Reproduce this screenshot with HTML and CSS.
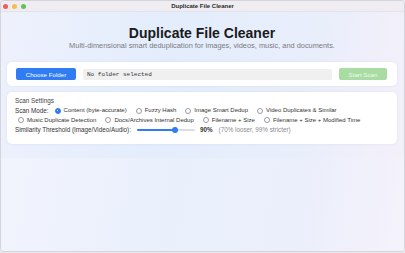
FILE: index.html
```html
<!DOCTYPE html>
<html lang="en">
<head>
  <meta charset="UTF-8" />
  <meta name="viewport" content="width=device-width, initial-scale=1.0"/>
  <title>Duplicate File Cleaner</title>
  <link rel="stylesheet" href="styles.css">
</head>
<body>

<div class="window">
  <!-- Title bar -->
  <div class="titlebar">
    <div class="lights">
      <span class="light red"></span>
      <span class="light yellow"></span>
      <span class="light green"></span>
    </div>
    <div class="window-title">Duplicate File Cleaner</div>
  </div>

  <div class="app">
    <div class="main">
      <div class="header">
        <h1>Duplicate File Cleaner</h1>
        <p class="subtitle">Multi-dimensional smart deduplication for images, videos, music, and documents.</p>
      </div>

      <!-- Folder picker -->
      <div class="card toolbar">
        <button class="choose-btn">Choose Folder</button>
        <div class="path">No folder selected</div>
        <button class="scan-btn" disabled>Start Scan</button>
      </div>

      <!-- Settings -->
      <div class="card settings">
        <div class="section-title">Scan Settings</div>
        <div class="modes">
          <span class="label">Scan Mode:</span>
          <label class="radio"><span class="dot checked"></span>Content (byte-accurate)</label>
          <label class="radio"><span class="dot"></span>Fuzzy Hash</label>
          <label class="radio"><span class="dot"></span>Image Smart Dedup</label>
          <label class="radio"><span class="dot"></span>Video Duplicates &amp; Similar</label>
          <label class="radio"><span class="dot"></span>Music Duplicate Detection</label>
          <label class="radio"><span class="dot"></span>Docs/Archives Internal Dedup</label>
          <label class="radio"><span class="dot"></span>Filename + Size</label>
          <label class="radio"><span class="dot"></span>Filename + Size + Modified Time</label>
        </div>
        <div class="threshold">
          <span class="label">Similarity Threshold (Image/Video/Audio):</span>
          <div class="slider">
            <div class="fill" style="width: 66%;"></div>
            <div class="thumb" style="left: 66%;"></div>
          </div>
          <span class="value">90%</span>
          <span class="hint">(70% looser, 99% stricter)</span>
        </div>
      </div>
    </div>
  </div>
</div>

</body>
</html>
```

FILE: styles.css
```css
html, body {
  margin: 0;
  padding: 0;
}

body {
  font-family: "Liberation Sans", Arial, sans-serif;
  width: 405px;
  height: 253px;
  background: #e9e9ee;
}

.window {
  height: 252px;
  display: flex;
  flex-direction: column;
  border: 1px solid #d3d4dc;
  border-radius: 4px;
  overflow: hidden;
  box-sizing: border-box;
}

.titlebar {
  height: 10px;
  background: #efedf1;
  display: flex;
  align-items: center;
  position: relative;
  border-bottom: 1px solid #e4e2e8;
}

.lights {
  display: flex;
  gap: 4px;
  padding-left: 2px;
}

.light {
  width: 5px;
  height: 5px;
  border-radius: 50%;
}

.red { background: #ee5f57; }
.yellow { background: #f5bd4f; }
.green { background: #5fc454; }

.window-title {
  position: absolute;
  left: 0;
  right: 0;
  text-align: center;
  font-size: 6px;
  font-weight: bold;
  color: #2a2a2a;
}

.app {
  flex: 1;
  background: linear-gradient(100deg, #f3f4fd 0%, #e9f0fc 45%, #ebeffb 75%, #f5f2fb 100%);
}

.main {
  background: linear-gradient(100deg, #eef1fc 0%, #e3edfc 40%, #e9eefb 75%, #f4f0fa 100%);
  padding: 0 7px 14px 6px;
}

.header {
  text-align: center;
  padding-top: 14px;
}

h1 {
  margin: 0;
  font-size: 14px;
  font-weight: bold;
  color: #1a1a1a;
  line-height: 15px;
}

.subtitle {
  margin: 0;
  font-size: 7.4px;
  color: #7a7a80;
  line-height: 9px;
}

.card {
  background: #ffffff;
  border-radius: 5px;
  box-shadow: 0 0 3px rgba(120, 130, 170, 0.12);
}

.toolbar {
  margin-top: 12px;
  display: flex;
  align-items: center;
  gap: 7px;
  padding: 6px 10px 6px 9px;
}

button {
  border: none;
  border-radius: 2px;
  font-family: "Liberation Sans", Arial, sans-serif;
  font-size: 6.2px;
  color: white;
  height: 12px;
  padding: 0;
}

.choose-btn {
  width: 60px;
  background: #2f7cf3;
}

.path {
  flex: 1;
  height: 11px;
  line-height: 11px;
  background: #f0f0f1;
  border-radius: 2px;
  font-family: "Liberation Mono", monospace;
  font-size: 6px;
  color: #333;
  padding-left: 4px;
}

.scan-btn {
  width: 48px;
  background: #a8dca3;
  color: #eef9ec;
}

.settings {
  margin-top: 6px;
  padding: 5px 8px 9px 8px;
  font-size: 6.3px;
  color: #333;
}

.section-title {
  line-height: 8px;
  color: #444;
  margin-bottom: 1px;
}

.modes {
  display: flex;
  flex-wrap: wrap;
  column-gap: 3px;
  line-height: 9.5px;
}

.label {
  color: #333;
}

.radio {
  display: flex;
  align-items: center;
  gap: 3px;
  margin: 0 3px 0 3px;
  font-size: 6px;
}

.dot {
  width: 4px;
  height: 4px;
  border: 0.6px solid #9a9aa2;
  border-radius: 50%;
  background: #fff;
}

.dot.checked {
  background: #2f7cf3;
  border-color: #2f7cf3;
  position: relative;
}

.dot.checked::after {
  content: "";
  position: absolute;
  left: 1.3px;
  top: 1.3px;
  width: 1.4px;
  height: 1.4px;
  border-radius: 50%;
  background: #fff;
}

.threshold {
  display: flex;
  align-items: center;
  line-height: 9.5px;
}

.slider {
  position: relative;
  width: 58px;
  height: 2px;
  background: #dcdce2;
  border-radius: 1px;
  margin: 0 5px 0 6px;
}

.fill {
  height: 100%;
  background: #2f7cf3;
  border-radius: 1px;
}

.thumb {
  position: absolute;
  top: -2px;
  width: 6px;
  height: 6px;
  margin-left: -3px;
  border-radius: 50%;
  background: #2f7cf3;
}

.value {
  font-weight: bold;
  color: #333;
}

.hint {
  margin-left: 6px;
  font-size: 6.3px;
  color: #8a8a90;
}
```
